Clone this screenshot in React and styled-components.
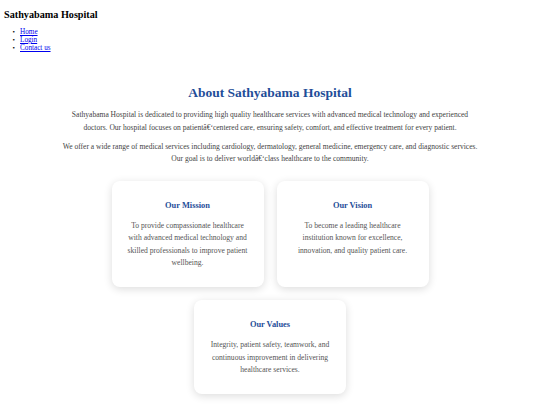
import React from "react";
import styled, { createGlobalStyle } from "styled-components";

const Global = createGlobalStyle`
  html, body { margin: 0; padding: 0; background: #ffffff; }
  body { font-family: "Liberation Serif", "Times New Roman", serif; }
`;

const Header = styled.header`
  padding: 4px 4px 0 4px;
`;

const Brand = styled.h2`
  margin: 5px 0 7px 0;
  font-size: 10.2px;
  line-height: 12px;
  font-weight: bold;
  color: #000;
`;

const NavList = styled.ul`
  margin: 0;
  padding-left: 16px;
  list-style: none;
  font-size: 7.2px;
  line-height: 8px;
`;

const NavItem = styled.li`
  display: flex;
  &::before {
    content: "•";
    width: 7.5px;
    margin-left: -7.5px;
    font-size: 7px;
  }
`;

const NavLink = styled.a`
  color: #0000ee;
  text-decoration: underline;
`;

const About = styled.section`
  max-width: 422px;
  margin: 0 auto;
  padding: 0 0 20px 0;
  text-align: center;
`;

const Title = styled.h1`
  margin: 33px 0 8px 0;
  font-size: 13.5px;
  line-height: 16px;
  color: #1f4e99;
  font-weight: bold;
`;

const Para = styled.p`
  margin: 0 0 6px 0;
  font-size: 7.55px;
  line-height: 12.8px;
  color: #444;
`;

const Cards = styled.div`
  display: flex;
  flex-wrap: wrap;
  justify-content: center;
  gap: 13px;
  margin: 15px -20px 0 -20px;
`;

const Card = styled.div`
  box-sizing: border-box;
  width: 152px;
  padding: 20px 12px 18px 12px;
  background: #fff;
  border-radius: 8px;
  box-shadow: 0 2px 8px rgba(0, 0, 0, 0.14);
`;

const CardTitle = styled.h3`
  margin: 0 0 9px 0;
  font-size: 8.4px;
  line-height: 10px;
  color: #1f4e99;
  font-weight: bold;
`;

const CardText = styled.p`
  margin: 0;
  font-size: 7.6px;
  line-height: 12.3px;
  color: #555;
`;

const cards = [
  {
    title: "Our Mission",
    text: "To provide compassionate healthcare with advanced medical technology and skilled professionals to improve patient wellbeing.",
  },
  {
    title: "Our Vision",
    text: "To become a leading healthcare institution known for excellence, innovation, and quality patient care.",
  },
  {
    title: "Our Values",
    text: "Integrity, patient safety, teamwork, and continuous improvement in delivering healthcare services.",
  },
];

export default function App() {
  return (
    <>
      <Global />
      <Header>
        <Brand>Sathyabama Hospital</Brand>
        <nav>
          <NavList>
            <NavItem><NavLink href="#">Home</NavLink></NavItem>
            <NavItem><NavLink href="#">Login</NavLink></NavItem>
            <NavItem><NavLink href="#">Contact us</NavLink></NavItem>
          </NavList>
        </nav>
      </Header>
      <About>
        <Title>About Sathyabama Hospital</Title>
        <Para>
          Sathyabama Hospital is dedicated to providing high quality healthcare services with advanced medical technology and experienced doctors. Our hospital focuses on patientâ€‘centered care, ensuring safety, comfort, and effective treatment for every patient.
        </Para>
        <Para>
          We offer a wide range of medical services including cardiology, dermatology, general medicine, emergency care, and diagnostic services. Our goal is to deliver worldâ€‘class healthcare to the community.
        </Para>
        <Cards>
          {cards.map((c) => (
            <Card key={c.title}>
              <CardTitle>{c.title}</CardTitle>
              <CardText>{c.text}</CardText>
            </Card>
          ))}
        </Cards>
      </About>
    </>
  );
}
